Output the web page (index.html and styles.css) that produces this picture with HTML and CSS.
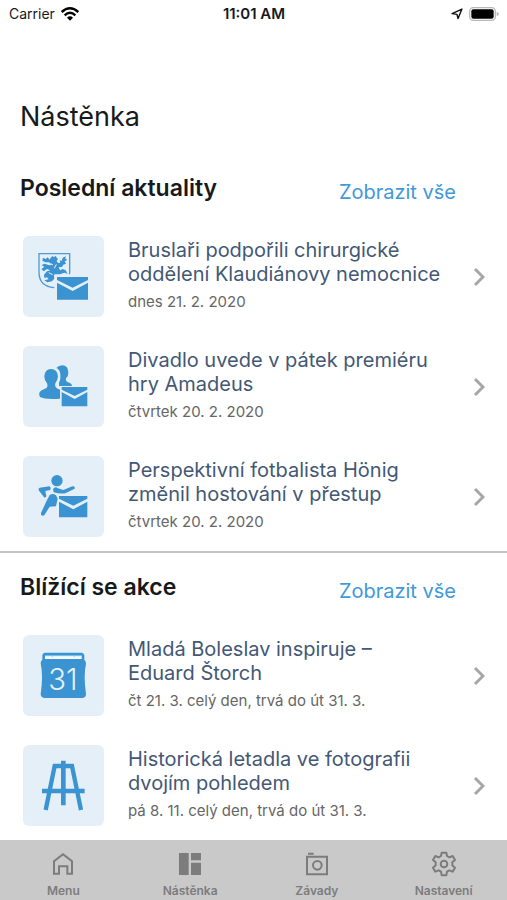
FILE: index.html
```html
<!DOCTYPE html>
<html lang="cs">
<head>
<meta charset="utf-8">
<meta name="viewport" content="width=device-width, initial-scale=1">
<title>Nástěnka</title>
<link rel="stylesheet" href="styles.css">
</head>
<body>
<div class="app">
  <header class="status">
    <span class="status-left">Carrier
      <svg class="wifi" viewBox="0 0 54 42" aria-hidden="true"><g fill="none" stroke="#000" stroke-width="7"><path d="M2 15Q27-7 52 15"/><path d="M11 25Q27 10 43 25"/></g><path d="M18 32Q27 24 36 32L27 41Z"/></svg>
    </span>
    <span class="status-time">11:01 AM</span>
    <span class="status-right">
      <svg class="location" viewBox="0 0 34 34" aria-hidden="true"><path d="M3 16 31 3 20 30 17 18Z" fill="none" stroke="#111" stroke-width="4" stroke-linejoin="round"/></svg>
      <svg class="battery" viewBox="0 0 90 42" aria-hidden="true"><rect x="2" y="2" width="77" height="38" rx="11" fill="#fff" stroke="#b9b9b9" stroke-width="4"/><rect x="7" y="7" width="67" height="28" rx="6"/><path d="M83 14Q90 17 90 21T83 28Z" fill="#b9b9b9"/></svg>
    </span>
  </header>

  <main class="content">
    <h1 class="page-title">Nástěnka</h1>

    <section class="section">
      <div class="section-head">
        <h2>Poslední aktuality</h2>
        <a class="more" href="#news">Zobrazit vše</a>
      </div>
      <ul class="list">
        <li><a class="item" href="#n1">
          <svg class="tile" viewBox="39 33 243 243" aria-hidden="true">
            <path d="M87 86H179V142Q177 186 132 188Q87 184 87 142Z" fill="none" stroke="#4a9dd6" stroke-width="4"/>
            <path d="M122 98 128 93 132 97 137 92 140 98 144 102 140 108 144 114 151 113 149 105 155 108 158 98 167 94 166 101 172 105 164 109 168 116 160 119 156 126 146 127 150 136 158 132 167 136 173 147 164 143 157 145 148 150 132 150 134 160 126 169 112 172 103 166 116 163 111 157 103 159 102 149 111 139 121 136 111 132 101 139 94 132 103 126 95 120 104 116 118 121 126 119 117 112 107 112 97 107 99 98 107 102 113 97 119 104Z" fill="#3b94d1"/>
            <path d="M122 116 129 120M116 143 128 149M139 118 133 130" stroke="#e5eff8" stroke-width="3"/>
            <path d="M133 148H244V232H133Z" fill="#e5eff8"/>
            <path d="M141 156H234V165L188 188 141 165ZM141 173 188 198 234 173V224H141Z" fill="#3b94d1"/>
          </svg>
          <span class="text"><span class="name">Bruslaři podpořili chirurgické oddělení Klaudiánovy nemocnice</span><span class="date">dnes 21. 2. 2020</span></span>
          <svg class="chevron" viewBox="0 0 12 20" aria-hidden="true"><path d="M2 2 10 10 2 18"/></svg>
        </a></li>
        <li><a class="item" href="#n2">
          <svg class="tile" viewBox="39 33 243 243" aria-hidden="true">
            <path d="M139 99Q146 91 157 91Q175 92 175 113Q175 125 168 130Q165 141 180 144Q186 147 186 153H147V143Q153 132 151 117Q149 103 139 99Z" fill="#3b94d1"/>
            <path d="M123 102Q143 103 144 124Q143 137 136 145Q133 157 143 161L150 164V191Q105 194 90 186Q84 176 92 168Q99 163 108 160Q115 156 111 145Q103 137 103 124Q104 103 123 102Z" fill="#3b94d1"/>
            <path d="M155 156H232V164L194 183 155 164ZM155 171 194 192 232 171V214H155Z" fill="#3b94d1"/>
          </svg>
          <span class="text"><span class="name">Divadlo uvede v pátek premiéru hry Amadeus</span><span class="date">čtvrtek 20. 2. 2020</span></span>
          <svg class="chevron" viewBox="0 0 12 20" aria-hidden="true"><path d="M2 2 10 10 2 18"/></svg>
        </a></li>
        <li><a class="item" href="#n3">
          <svg class="tile" viewBox="39 33 243 243" aria-hidden="true">
            <g fill="#3b94d1"><circle cx="141" cy="107" r="17"/>
            <path d="M89 128 119 124Q124 127 121 135L106 138 109 153Q106 161 101 155L86 136Q84 130 89 128Z"/>
            <path d="M129 132Q136 123 144 130L160 135 187 124Q196 123 194 131L166 145Q148 147 131 142Z"/>
            <path d="M119 150Q129 144 138 151L143 161 138 184Q129 184 119 185L104 209Q99 215 93 209V204L111 165Z"/>
            <path d="M147 153H232V161L190 182 147 161ZM147 170 190 193 232 170V217H147Z"/></g>
          </svg>
          <span class="text"><span class="name">Perspektivní fotbalista Hönig změnil hostování v přestup</span><span class="date">čtvrtek 20. 2. 2020</span></span>
          <svg class="chevron" viewBox="0 0 12 20" aria-hidden="true"><path d="M2 2 10 10 2 18"/></svg>
        </a></li>
      </ul>
    </section>

    <section class="section divided">
      <div class="section-head">
        <h2>Blížící se akce</h2>
        <a class="more" href="#events">Zobrazit vše</a>
      </div>
      <ul class="list">
        <li><a class="item" href="#e1">
          <svg class="tile" viewBox="39 30 243 243" aria-hidden="true">
            <path d="M105 83H215Q222 84 223 91V104Q228 108 228 116Q224 135 224 157Q224 180 228 207Q228 217 218 219H102Q93 218 92 208Q96 180 96 157Q96 135 92 115Q92 108 97 104V91Q98 84 105 83Z" fill="#3b94d1"/>
            <path d="M105 92H215V102H105Z" fill="#f4f9fd"/><path d="M105 92H215M127 90V97M193 90V97" stroke="#93c5e8" stroke-width="2"/>
            <text class="day" x="159" y="196" text-anchor="middle">31</text>
          </svg>
          <span class="text"><span class="name">Mladá Boleslav inspiruje – Eduard Štorch</span><span class="date">čt 21. 3. celý den, trvá do út 31. 3.</span></span>
          <svg class="chevron" viewBox="0 0 12 20" aria-hidden="true"><path d="M2 2 10 10 2 18"/></svg>
        </a></li>
        <li><a class="item" href="#e2">
          <svg class="tile" viewBox="39 30 243 243" aria-hidden="true">
            <g fill="none" stroke="#3b94d1"><path d="M107 225 134 93H186L213 225" stroke-width="13"/><path d="M160 77V211" stroke-width="14"/><path d="M96 168H224" stroke-width="13"/></g>
          </svg>
          <span class="text"><span class="name">Historická letadla ve fotografii dvojím pohledem</span><span class="date">pá 8. 11. celý den, trvá do út 31. 3.</span></span>
          <svg class="chevron" viewBox="0 0 12 20" aria-hidden="true"><path d="M2 2 10 10 2 18"/></svg>
        </a></li>
      </ul>
    </section>
  </main>

  <nav class="tabs">
    <a class="tab" href="#menu"><svg viewBox="0 0 78 78" aria-hidden="true"><path d="M12 68V31L39 10 66 31V68H52V46H27V68Z" fill="none" stroke="#7c7c7c" stroke-width="6"/></svg>Menu</a>
    <a class="tab" href="#board"><svg viewBox="0 0 78 78" aria-hidden="true"><path d="M6 6H35V72H6ZM42 6H72V28H42ZM42 35H72V72H42Z" fill="#7c7c7c"/></svg>Nástěnka</a>
    <a class="tab" href="#issues"><svg viewBox="0 0 78 78" aria-hidden="true"><g fill="none" stroke="#7c7c7c" stroke-width="6"><path d="M9 17H69V70H9ZM12 8H29"/><circle cx="40" cy="43" r="13"/></g></svg>Závady</a>
    <a class="tab" href="#settings"><svg viewBox="0 0 78 78" aria-hidden="true"><g fill="none" stroke="#7c7c7c" stroke-width="6" stroke-linejoin="round"><path d="M32 5H46L48 15 55 19 65 15 72 27 64 34V43L72 50 65 62 55 58 48 62 46 73H32L30 62 23 58 13 62 6 50 14 43V34L6 27 13 15 23 19 30 15Z"/><circle cx="39" cy="39" r="10"/></g></svg>Nastavení</a>
  </nav>
</div>
</body>
</html>
```
FILE: styles.css
```css
* {
  box-sizing: border-box;
}

body {
  margin: 0;
  background: #fff;
  color: #17191b;
  font-family: Inter, "Liberation Sans", sans-serif;
}

a {
  color: inherit;
  text-decoration: none;
}

.app {
  display: flex;
  flex-direction: column;
  min-height: 100vh;
}

.status {
  display: grid;
  grid-template-columns: 1fr auto 1fr;
  align-items: center;
  height: 27px;
  padding: 0 8px 0 9px;
  font-size: 14px;
}

.status-left,
.status-right {
  display: flex;
  align-items: center;
  gap: 6px;
}

.status-right {
  justify-content: flex-end;
}

.status-time {
  font-size: 15px;
  font-weight: 600;
}

.wifi {
  width: 18px;
  height: 14px;
}

.location {
  width: 12px;
  height: 12px;
}

.battery {
  width: 30px;
  height: 14px;
}

.content {
  flex: 1;
}

.page-title {
  margin: 0;
  padding: 73px 20px 20px;
  font-size: 27px;
  font-weight: 400;
  line-height: 34px;
}

.divided {
  border-top: 2px solid #c4c4c4;
}

.section {
  padding-bottom: 14px;
}

.section-head {
  display: flex;
  justify-content: space-between;
  align-items: flex-end;
  height: 50px;
  padding: 0 51px 0 20px;
}

.section-head h2 {
  margin: 0 0 4px;
  font-size: 23px;
  font-weight: 600;
  line-height: 24px;
}

.more {
  color: #4099d8;
  font-size: 20px;
  line-height: 24px;
}

.list {
  display: flex;
  flex-direction: column;
  gap: 29px;
  margin: 0;
  padding: 32px 22px 0 23px;
  list-style: none;
}

.item {
  display: flex;
  align-items: center;
  gap: 24px;
}

.tile {
  flex: none;
  width: 81px;
  height: 81px;
  border-radius: 6px;
  background: #e5eff8;
}

.day {
  fill: #e5f1fa;
  font-size: 88px;
  font-weight: 300;
}

.text {
  display: flex;
  flex: 1;
  flex-direction: column;
  gap: 6px;
  padding-bottom: 4px;
}

.name {
  max-width: 314px;
  color: #435875;
  font-size: 20px;
  line-height: 24px;
}

.date {
  color: #666;
  font-size: 15px;
  line-height: 20px;
}

.chevron {
  flex: none;
  width: 12px;
  height: 20px;
  fill: none;
  stroke: #a6a6a6;
  stroke-width: 3;
}

.tabs {
  display: grid;
  grid-template-columns: repeat(4, 1fr);
  height: 61px;
  background: #c9c9c9;
}

.tab {
  display: flex;
  flex-direction: column;
  align-items: center;
  gap: 6px;
  padding-top: 11px;
  color: #7c7c7c;
  font-size: 12px;
  font-weight: 600;
  line-height: 16px;
}

.tab svg {
  width: 26px;
  height: 26px;
}
```
